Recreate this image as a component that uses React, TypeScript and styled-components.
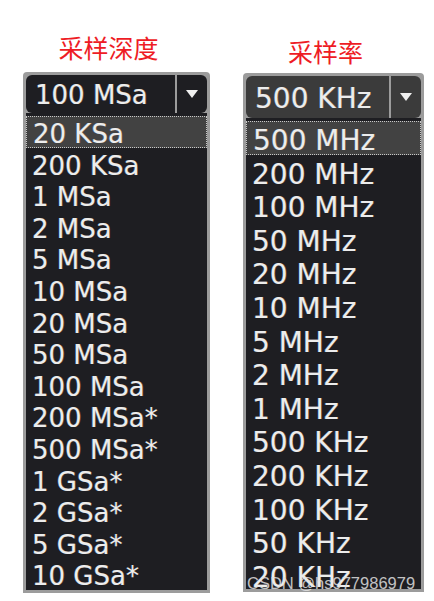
import React from "react";
import styled, { createGlobalStyle } from "styled-components";

const GlobalStyle = createGlobalStyle`
  html, body {
    margin: 0;
    padding: 0;
    background: #ffffff;
  }
  body {
    font-family: "DejaVu Sans", Verdana, sans-serif;
  }
`;

const Page = styled.div`
  position: relative;
  width: 434px;
  height: 601px;
  overflow: hidden;
  display: flex;
  align-items: flex-start;
  gap: 33px;
  padding-left: 23px;
  box-sizing: border-box;
`;

const Column = styled.div<{ $width: number; $top: number }>`
  width: ${(p) => p.$width}px;
  display: flex;
  flex-direction: column;
  padding-top: ${(p) => p.$top}px;
`;

const Title = styled.div<{ $gap: number }>`
  color: #ee1c25;
  font-family: "Noto Sans CJK SC", sans-serif;
  font-size: 25px;
  line-height: 30px;
  text-align: center;
  padding-right: 16px;
  margin-bottom: ${(p) => p.$gap}px;
`;

const Frame = styled.div`
  background: #9c9c9c;
  border-radius: 4px 4px 0 0;
  padding: 3px;
  display: flex;
  flex-direction: column;
  gap: 3px;
`;

const Select = styled.div<{ $height: number; $bg: string }>`
  height: ${(p) => p.$height}px;
  display: flex;
  background: ${(p) => p.$bg};
  border-radius: 6px;
  overflow: hidden;
`;

const textGlow = `
  text-shadow: 0.6px 0 rgba(230, 150, 70, 0.4), -0.6px 0 rgba(90, 170, 255, 0.4);
`;

const Value = styled.div<{ $size: number; $pad: number }>`
  flex: 1;
  display: flex;
  align-items: center;
  padding-left: ${(p) => p.$pad}px;
  padding-top: 2px;
  color: #ececec;
  font-size: ${(p) => p.$size}px;
  ${textGlow}
`;

const ArrowBox = styled.div`
  width: 30px;
  border-left: 2px solid #9c9c9c;
  display: flex;
  align-items: center;
  justify-content: center;
`;

const Arrow = styled.div`
  width: 0;
  height: 0;
  border-left: 6px solid transparent;
  border-right: 6px solid transparent;
  border-top: 8px solid #f0f0f0;
`;

const List = styled.div<{ $height?: number }>`
  background: #1e1e22;
  margin: -3px 0 0;
  padding-top: 3px;
  ${(p) => (p.$height ? `height: ${p.$height}px; overflow: hidden;` : "")}
  display: flex;
  flex-direction: column;
`;

const Item = styled.div<{ $size: number; $row: number; $active?: boolean }>`
  height: ${(p) => p.$row}px;
  flex-shrink: 0;
  box-sizing: border-box;
  padding-left: 6px;
  padding-top: 6px;
  line-height: ${(p) => p.$row - 6 - (p.$active ? 2 : 0)}px;
  font-size: ${(p) => p.$size}px;
  color: #ececec;
  white-space: nowrap;
  ${textGlow}
  background: ${(p) => (p.$active ? "#424242" : "transparent")};
  border: ${(p) => (p.$active ? "1px dotted #c8c8c8" : "none")};
`;

const Watermark = styled.div`
  position: absolute;
  left: 247px;
  top: 574px;
  font-family: "Liberation Sans", Arial, sans-serif;
  font-size: 16.5px;
  color: rgba(225, 225, 225, 0.85);
  white-space: nowrap;
`;

type DropdownProps = {
  title: string;
  value: string;
  items: string[];
  width: number;
  top: number;
  titleGap: number;
  size: number;
  row: number;
  selectHeight: number;
  selectBg: string;
  valuePad: number;
  listHeight?: number;
};

const Dropdown = (props: DropdownProps) => {
  return (
    <Column $width={props.width} $top={props.top}>
      <Title $gap={props.titleGap}>{props.title}</Title>
      <Frame>
        <Select $height={props.selectHeight} $bg={props.selectBg}>
          <Value $size={props.size} $pad={props.valuePad}>
            {props.value}
          </Value>
          <ArrowBox>
            <Arrow />
          </ArrowBox>
        </Select>
        <List $height={props.listHeight}>
          {props.items.map((item, i) => (
            <Item key={item} $size={props.size} $row={props.row} $active={i === 0}>
              {item}
            </Item>
          ))}
        </List>
      </Frame>
    </Column>
  );
};

const depths = [
  "20 KSa",
  "200 KSa",
  "1 MSa",
  "2 MSa",
  "5 MSa",
  "10 MSa",
  "20 MSa",
  "50 MSa",
  "100 MSa",
  "200 MSa*",
  "500 MSa*",
  "1 GSa*",
  "2 GSa*",
  "5 GSa*",
  "10 GSa*",
];

const rates = [
  "500 MHz",
  "200 MHz",
  "100 MHz",
  "50 MHz",
  "20 MHz",
  "10 MHz",
  "5 MHz",
  "2 MHz",
  "1 MHz",
  "500 KHz",
  "200 KHz",
  "100 KHz",
  "50 KHz",
  "20 KHz",
];

const App = () => {
  return (
    <Page>
      <GlobalStyle />
      <Dropdown
        title="采样深度"
        value="100 MSa"
        items={depths}
        width={187}
        top={32}
        titleGap={10}
        size={26}
        row={31.6}
        selectHeight={38}
        selectBg="#1e1e22"
        valuePad={9}
      />
      <Dropdown
        title="采样率"
        value="500 KHz"
        items={rates}
        width={181}
        top={36}
        titleGap={7}
        size={28}
        row={33.6}
        selectHeight={42}
        selectBg="#3b3b3b"
        valuePad={9}
        listHeight={468}
      />
      <Watermark>CSDN @hs977986979</Watermark>
    </Page>
  );
};

export default App;
